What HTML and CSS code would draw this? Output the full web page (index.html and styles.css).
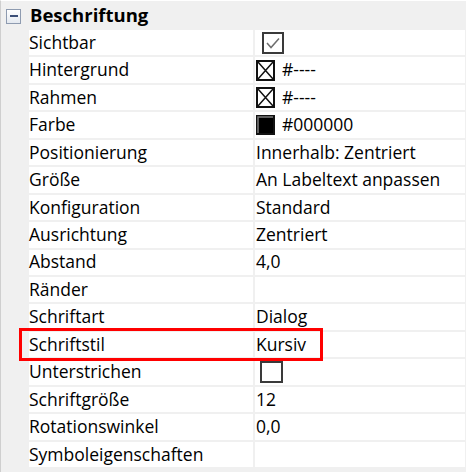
FILE: index.html
```html
<!DOCTYPE html>
<html lang="de">
<head>
<meta charset="utf-8">
<title>Beschriftung</title>
<link rel="stylesheet" href="styles.css">
</head>
<body>
<div class="panel">
  <div class="header">
    <span class="toggle"><span class="minus"></span></span>
    <span class="title">Beschriftung</span>
  </div>
  <div class="rows">
    <div class="row"><div class="name">Sichtbar</div><div class="value">
      <svg class="check" width="22" height="22" viewBox="0 0 22 22"><rect x="1" y="1" width="20" height="20" fill="#fff" stroke="#3a3a3a" stroke-width="2"/><polyline points="5,11 9,15.5 17,6.5" fill="none" stroke="#6e6e6e" stroke-width="1.5"/></svg>
    </div></div>
    <div class="row"><div class="name">Hintergrund</div><div class="value">
      <svg class="swatch" width="19" height="21" viewBox="0 0 19 21"><rect x="1" y="1" width="17" height="19" fill="#fff" stroke="#111" stroke-width="2"/><path d="M2 2 L17 19 M17 2 L2 19" stroke="#111" stroke-width="1.5"/></svg>
      <span class="vtext">#----</span>
    </div></div>
    <div class="row"><div class="name">Rahmen</div><div class="value">
      <svg class="swatch" width="19" height="21" viewBox="0 0 19 21"><rect x="1" y="1" width="17" height="19" fill="#fff" stroke="#111" stroke-width="2"/><path d="M2 2 L17 19 M17 2 L2 19" stroke="#111" stroke-width="1.5"/></svg>
      <span class="vtext">#----</span>
    </div></div>
    <div class="row"><div class="name">Farbe</div><div class="value">
      <svg class="swatch" width="19" height="20" viewBox="0 0 19 20"><rect x="0" y="0" width="19" height="20" fill="#111"/><path d="M2 18 L2 2 L17 2" fill="none" stroke="#7a7a7a" stroke-width="1.5"/><rect x="3" y="3" width="14" height="15" fill="#000"/></svg>
      <span class="vtext">#000000</span>
    </div></div>
    <div class="row"><div class="name">Positionierung</div><div class="value">Innerhalb: Zentriert</div></div>
    <div class="row"><div class="name">Größe</div><div class="value">An Labeltext anpassen</div></div>
    <div class="row"><div class="name">Konfiguration</div><div class="value">Standard</div></div>
    <div class="row"><div class="name">Ausrichtung</div><div class="value">Zentriert</div></div>
    <div class="row"><div class="name">Abstand</div><div class="value">4,0</div></div>
    <div class="row"><div class="name">Ränder</div><div class="value"></div></div>
    <div class="row"><div class="name">Schriftart</div><div class="value">Dialog</div></div>
    <div class="row"><div class="name">Schriftstil</div><div class="value">Kursiv</div></div>
    <div class="row"><div class="name">Unterstrichen</div><div class="value">
      <svg class="check unchecked" width="23" height="22" viewBox="0 0 23 22"><rect x="1" y="1" width="21" height="20" fill="#fff" stroke="#3a3a3a" stroke-width="2"/></svg>
    </div></div>
    <div class="row"><div class="name">Schriftgröße</div><div class="value">12</div></div>
    <div class="row"><div class="name">Rotationswinkel</div><div class="value">0,0</div></div>
    <div class="row"><div class="name">Symboleigenschaften</div><div class="value"></div></div>
  </div>
  <div class="highlight"></div>
</div>
</body>
</html>
```

FILE: styles.css
```css
html, body {
  margin: 0;
  padding: 0;
  background: #f0f0f0;
}

body {
  font-family: "Open Sans", "Noto Sans", "Liberation Sans", sans-serif;
  font-size: 17.5px;
  color: #000;
}

.panel {
  position: relative;
  width: 466px;
  height: 472px;
  border-left: 1px solid #cfcfcf;
  box-sizing: border-box;
  border-top: 1px solid #fff;
}

.header {
  height: 29px;
  display: flex;
  align-items: center;
  background: #f0f0f0;
}

.toggle {
  width: 13px;
  height: 13px;
  margin-left: 5px;
  margin-top: 1px;
  border: 1px solid #8e9bb0;
  background: linear-gradient(#ffffff, #e4e9f0);
  display: flex;
  align-items: center;
  justify-content: center;
}

.minus {
  width: 8px;
  height: 2px;
  background: #3c4f78;
}

.title {
  font-weight: 700;
  font-size: 18.5px;
  margin-left: 9px;
  line-height: 1;
}

.rows {
  display: flex;
  flex-direction: column;
  gap: 2px;
  padding-left: 28px;
  width: 436px;
}

.row {
  height: 25.44px;
  display: flex;
  background: #f0f0f0;
  gap: 2px;
}

.name {
  width: 224px;
  background: #fff;
  display: flex;
  align-items: center;
  line-height: 1;
  white-space: nowrap;
}

.value {
  flex: 1;
  background: #fff;
  display: flex;
  align-items: center;
  padding-left: 1px;
  line-height: 1;
  white-space: nowrap;
}

.swatch {
  display: block;
  flex: none;
}

.vtext {
  margin-left: 7px;
}

.check {
  display: block;
  margin-left: 6px;
}

.check.unchecked {
  margin-left: 4px;
}

.highlight {
  position: absolute;
  left: 18px;
  top: 327px;
  width: 304px;
  height: 33px;
  box-sizing: border-box;
  border: 3px solid #ff0000;
}
```
